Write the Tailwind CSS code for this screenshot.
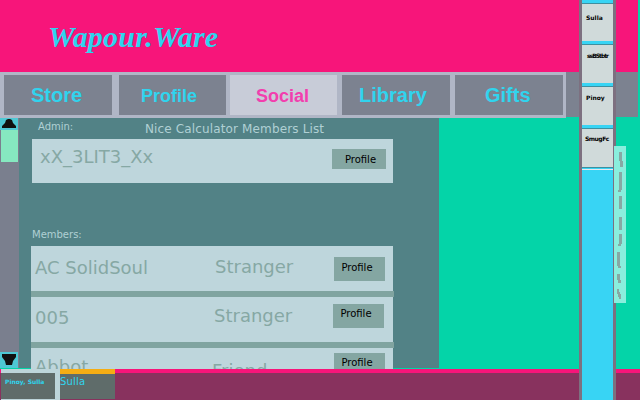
<!DOCTYPE html>
<html lang="en">
<head>
  <meta charset="UTF-8">
  <title>Wapour.Ware</title>
  <script src="https://cdn.jsdelivr.net/npm/@tailwindcss/browser@4"></script>
</head>
<body class="bg-[#04d4a8]">
  <div class="relative w-[640px] h-[400px] overflow-hidden flex flex-col font-['DejaVu_Sans',sans-serif]">
    <!-- header -->
    <div class="h-[72px] w-[638px] shrink-0 bg-[#f7157a] pl-[48px] pt-[18px]">
      <h1 class="font-['Liberation_Serif',serif] italic font-bold text-[30px] leading-[38px] tracking-[0.2px] text-[#30d4ee]">Wapour.Ware</h1>
    </div>

    <!-- nav -->
    <div class="h-[46px] w-[638px] shrink-0 flex items-start">
      <nav class="w-[566px] h-[46px] flex items-stretch pt-[3px] pb-[3px] pl-[4px] bg-[#b0b6c6] font-['Liberation_Sans',sans-serif] font-bold text-[#30d4ee]">
        <a class="w-[108px] bg-[#7c8290] flex items-center pl-[27px] text-[20px]">Store</a>
        <a class="w-[107px] ml-[7px] bg-[#7c8290] flex items-center pl-[22px] pt-[2px] text-[18px]">Profile</a>
        <a class="w-[107px] ml-[4px] bg-[#c8ccd8] flex items-center pl-[26px] pt-[2px] text-[18px] text-[#f23fae]">Social</a>
        <a class="w-[108px] ml-[5px] bg-[#7c8290] flex items-center pl-[17px] text-[20px]">Library</a>
        <a class="w-[108px] ml-[5px] bg-[#7c8290] flex items-center pl-[30px] text-[20px]">Gifts</a>
      </nav>
      <div class="flex-1 h-[45px] bg-[#7c8290]"></div>
    </div>

    <!-- content -->
    <div class="h-[251px] shrink-0 flex items-start">
      <div class="w-[19px] h-[250px] shrink-0 bg-[#7a7f8e] flex flex-col">
        <div class="w-[18px] h-[12px] shrink-0 bg-[#4ec8d4]">
          <svg width="18" height="12" viewBox="0 0 18 12"><path d="M2 10 L2 8 L5 5 L6 2 L8 1 L10 1 L12 2 L13 5 L16 8 L16 10 Z" fill="#111"/></svg>
        </div>
        <div class="ml-[1px] w-[17px] h-[32px] shrink-0 bg-[#86e8c0]"></div>
        <div class="mt-auto w-[18px] h-[16px] shrink-0 bg-[#4ec8d4]">
          <svg width="18" height="16" viewBox="0 0 18 16"><path d="M2 2 L16 2 L16 5 L13 9 L12 13 L6 13 L5 9 L2 5 Z" fill="#111"/></svg>
        </div>
      </div>

      <div class="w-[420px] h-[250px] shrink-0 bg-[#528286] pl-[12px] flex flex-col text-[#b0d0d4]">
        <div class="h-[21px] shrink-0 relative">
          <span class="block pl-[7px] pt-[3px] text-[10px] leading-[12px]">Admin:</span>
          <span class="absolute left-[114px] top-[3px] text-[12px] leading-[16px] tracking-[0.14px] whitespace-nowrap">Nice Calculator Members List</span>
        </div>
        <div class="ml-[1px] w-[361px] h-[44px] shrink-0 bg-[#bed6dc] relative text-[#86a8a4]">
          <span class="absolute left-[8px] top-[4px] text-[18px]">xX_3LIT3_Xx</span>
          <button class="absolute left-[300px] top-[10px] w-[54px] h-[20px] bg-[#84a6a2] text-black text-[10px] pl-[3px]">Profile</button>
        </div>
        <div class="pt-[46px] h-[63px] shrink-0 text-[10px] leading-[12px] pl-[1px]">Members:</div>

        <div class="w-[363px] shrink-0 flex flex-col text-[#86a8a4]">
          <div class="w-[362px] h-[45px] shrink-0 bg-[#bed6dc] relative">
            <span class="absolute left-[4px] top-[8px] text-[18px] whitespace-nowrap">AC SolidSoul</span>
            <span class="absolute left-[184px] top-[7px] text-[18px]">Stranger</span>
            <button class="absolute left-[303px] top-[11px] w-[51px] h-[24px] bg-[#84a6a2] text-black text-[10px] pr-[5px] pb-[3px]">Profile</button>
          </div>
          <div class="h-[6px] shrink-0 bg-[#80a4a0]"></div>
          <div class="w-[362px] h-[45px] shrink-0 bg-[#bed6dc] relative">
            <span class="absolute left-[4px] top-[7px] text-[18px]">005</span>
            <span class="absolute left-[183px] top-[5px] text-[18px]">Stranger</span>
            <button class="absolute left-[302px] top-[7px] w-[51px] h-[24px] bg-[#84a6a2] text-black text-[10px] pr-[5px] pb-[5px]">Profile</button>
          </div>
          <div class="h-[6px] shrink-0 bg-[#80a4a0]"></div>
          <div class="w-[362px] h-[45px] shrink-0 bg-[#bed6dc] relative">
            <span class="absolute left-[4px] top-[5px] text-[18px]">Abbot</span>
            <span class="absolute left-[181px] top-[9px] text-[18px]">Friend</span>
            <button class="absolute left-[303px] top-[5px] w-[51px] h-[24px] bg-[#84a6a2] text-black text-[10px] pr-[5px] pb-[5px]">Profile</button>
          </div>
        </div>
      </div>
    </div>

    <!-- bottom bar -->
    <div class="relative z-10 flex-1 flex bg-[#88325e]">
      <div class="w-[60px] flex bg-[#bdd5da]">
        <div class="w-[1px] flex flex-col bg-[#88325e]">
          <div class="h-[4px] bg-[#f7157a]"></div>
        </div>
        <div class="w-[54px] h-[26px] mt-[4px] bg-[#5f6c6a] text-[#30d4ee] text-[6px] leading-[9px] font-bold pl-[4px] pt-[4px] whitespace-nowrap">Pinoy, Sulla</div>
      </div>
      <div class="w-[55px] flex flex-col">
        <div class="h-[5px] shrink-0 bg-[#f5ad14]"></div>
        <div class="h-[25px] shrink-0 bg-[#5f6c6a] text-[#30d4ee] text-[10px] leading-[12px] tracking-[0.2px] pt-[2px]">Sulla</div>
      </div>
      <div class="flex-1 h-[4px] bg-[#f7157a]"></div>
    </div>

    <!-- friends dock, sits over the page -->
    <div class="absolute z-20 left-[579px] top-0 w-[37px] h-[400px] border-x-[3px] border-[#7d7080] bg-[#38d4f4] flex flex-col text-black text-[6px] leading-[8px] font-bold">
      <div class="h-[3px] shrink-0"></div>
      <div class="h-[38px] shrink-0 border-t border-[#3f8f9f] bg-[#d0dada] pl-[4px] pt-[10px]">Sulla</div>
      <div class="h-[4px] shrink-0 border-b border-[#3f8f9f]"></div>
      <div class="h-[38px] shrink-0 bg-[#d0dada] pl-[5px] pt-[7px] tracking-[-1px] whitespace-nowrap">ssBStbtr</div>
      <div class="h-[4px] shrink-0 border-b border-[#3f8f9f]"></div>
      <div class="h-[38px] shrink-0 bg-[#d0dada] pl-[4px] pt-[7px]">Pinoy</div>
      <div class="h-[4px] shrink-0 border-b border-[#3f8f9f]"></div>
      <div class="h-[38px] shrink-0 bg-[#d0dada] pl-[3px] pt-[6px] tracking-[-0.5px] whitespace-nowrap">SmugFc</div>
      <div class="h-[1px] shrink-0 bg-[#3f8f9f]"></div>
      <div class="h-[1px] shrink-0 mt-[1px] bg-[#e8e8ee]"></div>
    </div>
    <div class="absolute z-20 left-[614px] top-[146px] w-[12px] h-[157px] bg-[#8aeedd]">
      <svg width="12" height="157" viewBox="0 0 12 157" fill="#86a8a4">
        <path d="M5 6h3v9h1v6H6v-6H5z"/>
        <path d="M5 26h3v18H7v2H4v-2h1z"/>
        <path d="M5 50h3v13H5z"/>
        <path d="M5 71h3v13H5z"/>
        <path d="M5 88h3v10H7v2H4v-2h1z"/>
        <path d="M3 106h3v14h1v2H4v-2H3z"/>
        <path d="M3 128h3v6h1v3H4v-3H3z"/>
        <path d="M3 143h2v3h1v2h1v5H5v-2H4v-3H3z"/>
      </svg>
    </div>
  </div>
</body>
</html>
